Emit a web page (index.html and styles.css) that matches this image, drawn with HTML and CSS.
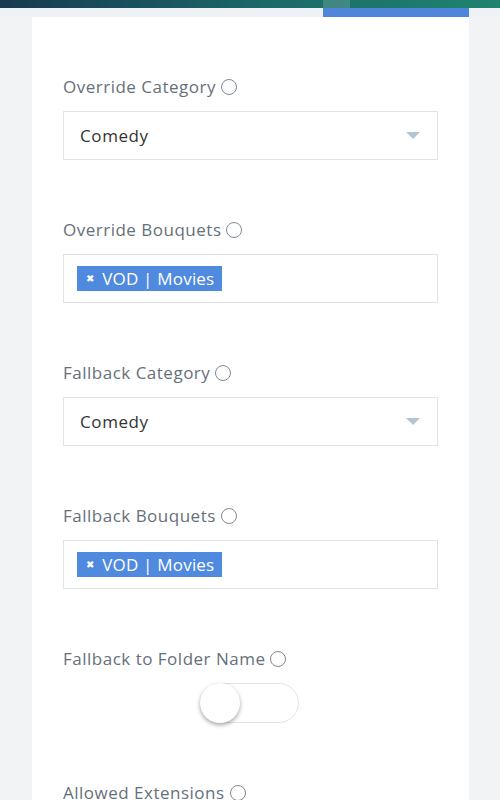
FILE: index.html
```html
<!DOCTYPE html>
<html>
<head>
<meta charset="utf-8">
<link rel="stylesheet" href="styles.css">
</head>
<body>
<div class="topbar"><div class="spacer"></div><div class="mark"></div></div>
<div class="subbar"><div class="spacer"></div><div class="tab"></div></div>
<div class="card">
  <div class="group">
    <div class="label">Override Category <span class="hint"></span></div>
    <div class="select"><span>Comedy</span><span class="arrow"></span></div>
  </div>
  <div class="group">
    <div class="label">Override Bouquets <span class="hint"></span></div>
    <div class="multi"><span class="tag"><span class="x">&#x2716;</span>VOD | Movies</span></div>
  </div>
  <div class="group">
    <div class="label">Fallback Category <span class="hint"></span></div>
    <div class="select"><span>Comedy</span><span class="arrow"></span></div>
  </div>
  <div class="group">
    <div class="label">Fallback Bouquets <span class="hint"></span></div>
    <div class="multi"><span class="tag"><span class="x">&#x2716;</span>VOD | Movies</span></div>
  </div>
  <div class="group toggle-group">
    <div class="label">Fallback to Folder Name <span class="hint"></span></div>
    <div class="toggle-row"><div class="toggle"><div class="knob"></div></div></div>
  </div>
  <div class="group last">
    <div class="label">Allowed Extensions <span class="hint"></span></div>
  </div>
</div>
</body>
</html>
```
FILE: styles.css
```css
html, body { margin: 0; padding: 0; }
body {
  background: #f2f3f5;
  font-family: "Open Sans", "Noto Sans", sans-serif;
  height: 800px;
  overflow: hidden;
}
.topbar {
  height: 8px;
  display: flex;
  background: linear-gradient(90deg, #163a51 0%, #1b6a68 55%, #1f8470 100%);
}
.topbar .spacer { width: 323px; }
.topbar .mark { width: 27px; background: rgba(255,255,255,0.16); }
.subbar {
  height: 9px;
  display: flex;
  background: #eef2f6;
}
.subbar .spacer { width: 323px; }
.subbar .tab { width: 146px; background: #4f86db; }
.card {
  margin-left: 32px;
  width: 375px;
  background: #fff;
  padding: 58px 31px 0 31px;
  height: 725px;
}
.group { margin-bottom: 58px; }
.toggle-group { margin-bottom: 58px; }
.group.last { margin-bottom: 0; }
.label {
  font-size: 17px;
  line-height: 24px;
  color: #66707a;
  display: flex;
  align-items: center;
  gap: 5px;
  margin-bottom: 12px;
  letter-spacing: 0.5px;
}
.hint {
  width: 16px;
  height: 16px;
  border: 1.5px solid #7f8991;
  border-radius: 50%;
  box-sizing: border-box;
  display: inline-block;
}
.select {
  height: 49px;
  box-sizing: border-box;
  border: 1.5px solid #e1e4e7;
  display: flex;
  align-items: center;
  justify-content: space-between;
  padding: 0 16px 0 16px;
  font-size: 17px;
  letter-spacing: 0.6px;
  color: #333;
}
.arrow {
  width: 0; height: 0;
  border-left: 7px solid transparent;
  border-right: 7px solid transparent;
  border-top: 7px solid #b3c5d4;
  margin-right: 1px;
}
.multi {
  height: 49px;
  box-sizing: border-box;
  border: 1.5px solid #e1e4e7;
  display: flex;
  align-items: center;
  padding: 0 13px;
}
.tag {
  background: #4f8ade;
  color: #fff;
  font-size: 17px;
  letter-spacing: 0.2px;
  height: 25px;
  line-height: 25px;
  padding: 0 8px 0 9px;
  display: inline-flex;
  align-items: center;
}
.tag .x { font-size: 10px; margin-right: 8px; }
.toggle-row { display: flex; justify-content: center; padding-right: 2px; }
.toggle {
  width: 99px;
  height: 40px;
  box-sizing: border-box;
  border: 1px solid #e3e3e3;
  border-radius: 20px;
  position: relative;
  background: #fff;
}
.knob {
  position: absolute;
  left: -1px; top: -1px;
  width: 40px; height: 40px;
  border-radius: 50%;
  background: #fff;
  box-shadow: 0 2px 4px rgba(0,0,0,0.35);
}
```
